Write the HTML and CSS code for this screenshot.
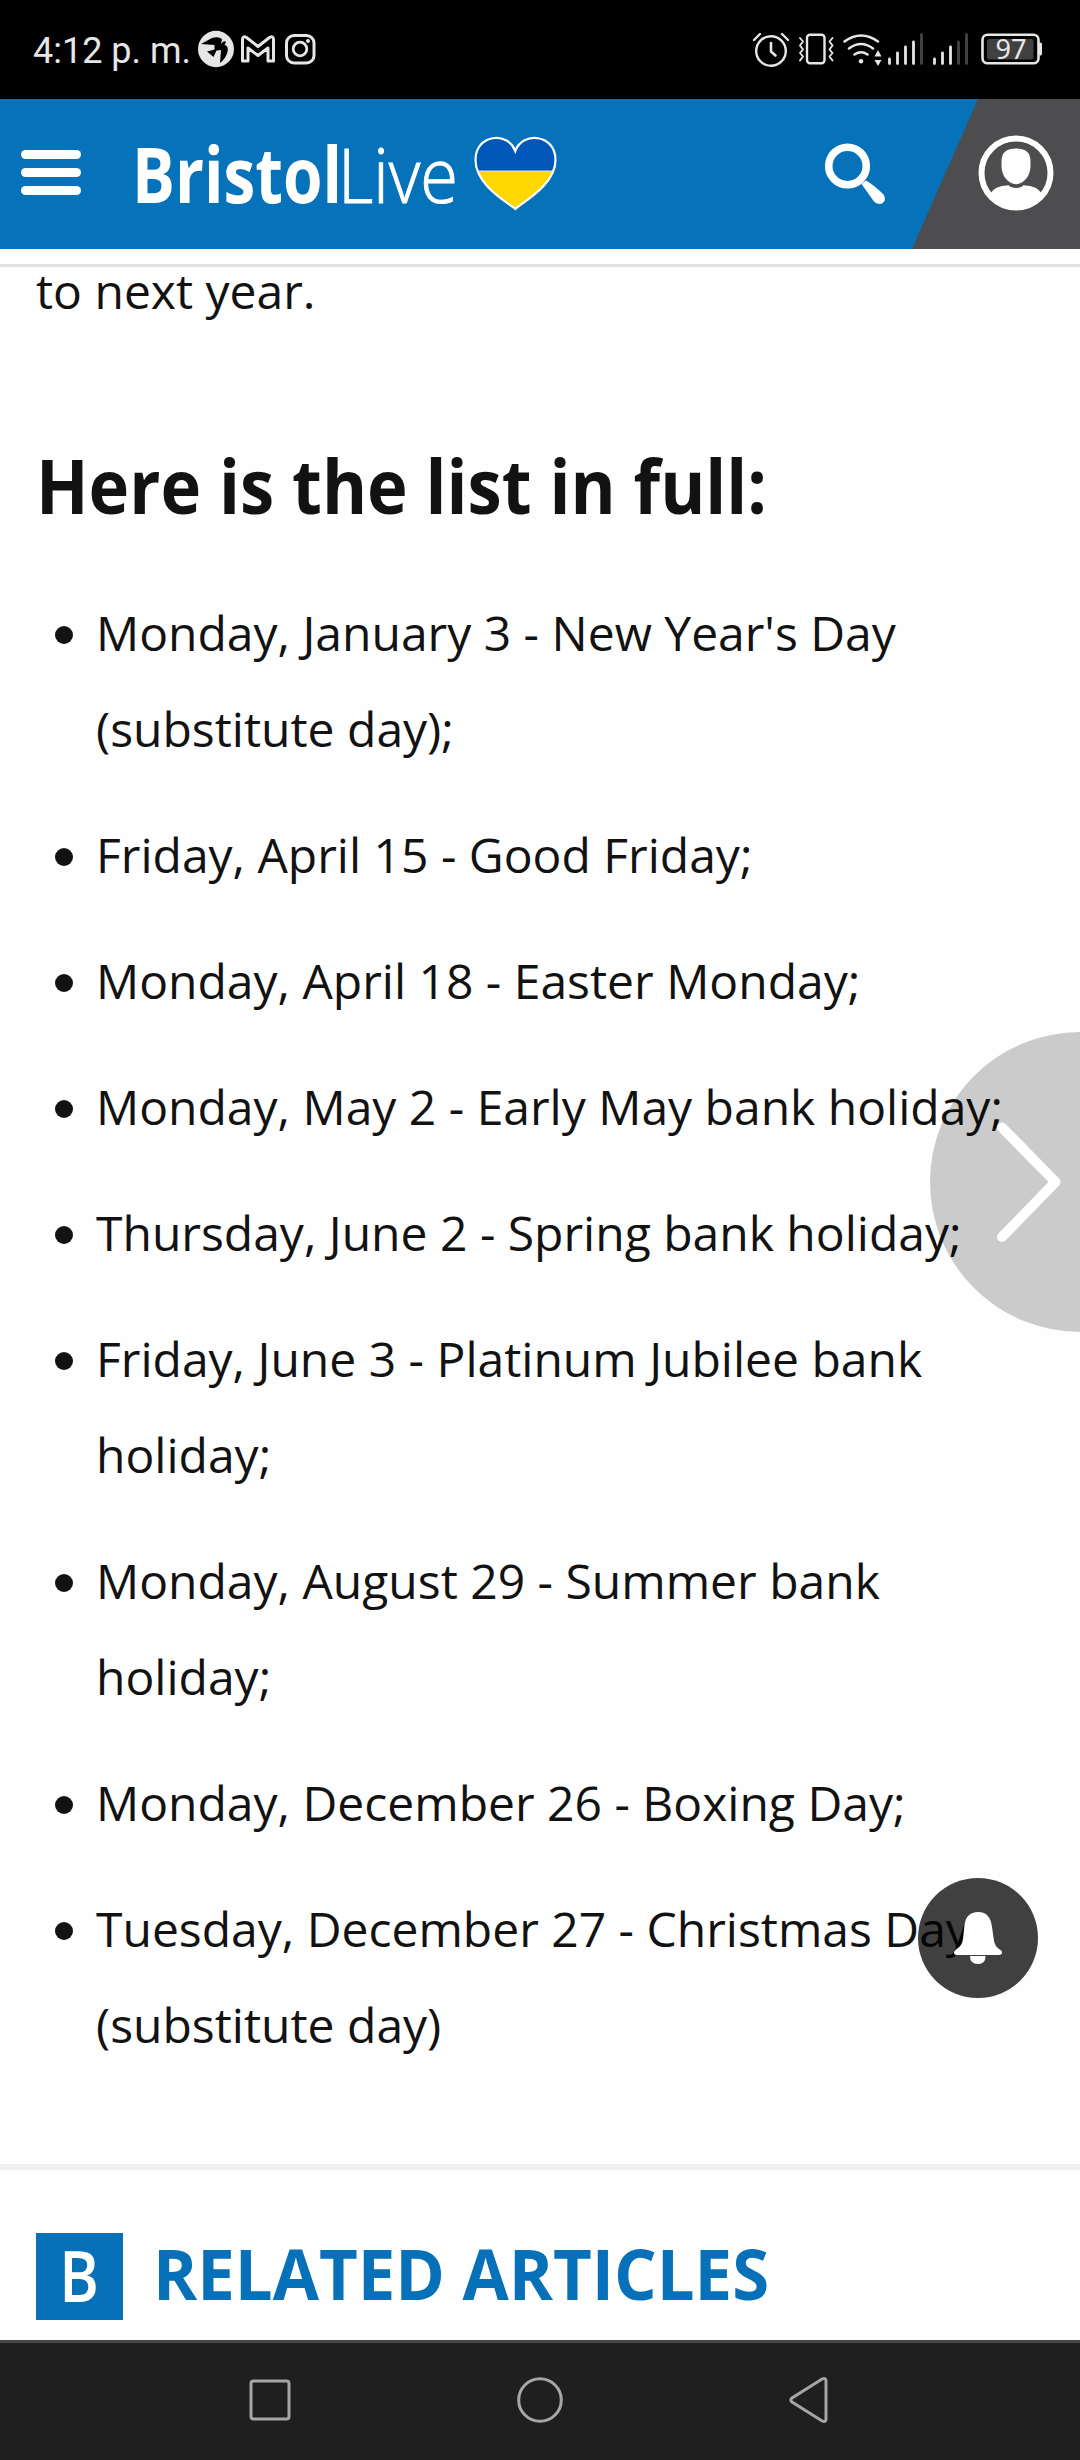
FILE: index.html
```html
<!DOCTYPE html>
<html lang="en">
<head>
  <meta charset="UTF-8">
  <meta name="viewport" content="width=device-width, initial-scale=1">
  <title>Bristol Live</title>
  <link rel="stylesheet" href="styles.css">
</head>
<body>

  <div class="status-bar">
    <span class="time">4:12 p. m.</span>
    <svg class="status-left" width="120" height="40" viewBox="197 29 120 40">
      <ellipse cx="216" cy="49" rx="18" ry="18.2" fill="#e6e6e6"/>
      <path fill="#000" d="M201 44 L211 38.5 Q218 36 222 39 L221 44 Q224 40 226 42 L224.500 45 Q229 46 227.500 52 Q225.500 59 220 63 L221 50 L216.500 50.500 L213.500 57 L207 51.500 L214.500 49.500 L214.500 45 Z"/>
      <path fill="none" stroke="#e6e6e6" stroke-width="3" stroke-linejoin="round" d="M242.500 61 V39.500 Q242.500 35.500 246.500 37.500 L258 46.500 L269.500 37.500 Q273.500 35.500 273.500 39.500 V61 H268 V48 L258 55.500 L248 48 V61 Z"/>
      <rect x="286.500" y="35.500" width="27.500" height="27.500" rx="7.500" fill="none" stroke="#e6e6e6" stroke-width="3"/>
      <circle cx="300" cy="49" r="6.800" fill="none" stroke="#e6e6e6" stroke-width="2.800"/>
      <circle cx="308" cy="41" r="2" fill="#e6e6e6"/>
    </svg>
    <svg class="status-right" width="296" height="40" viewBox="750 29 296 40" fill="none" stroke="#e6e6e6" stroke-linecap="round" stroke-linejoin="round">
      <circle cx="771" cy="51" r="14.800" stroke-width="2.400"/>
      <path stroke-width="2.600" d="M771 43 V51.500 L775.500 55.500"/>
      <path stroke-width="2.400" d="M754 40 L760 34 M782 34 L788 40"/>
      <rect x="807" y="34.700" width="17.500" height="28.500" rx="3" stroke-width="2.400"/>
      <path stroke-width="1.900" d="M800 38 L803 41.500 L800 45.500 L803 49.500 L800 53 L803 56.500 L800 60.500 M832.500 38 L829.500 41.500 L832.500 45.500 L829.500 49.500 L832.500 53 L829.500 56.500 L832.500 60.500"/>
      <path stroke-width="2.500" d="M844.500 41.500 Q861 29.500 878 41.500 M849 48.500 Q861 39.500 873 48.500 M854.500 54.500 Q861 50 867.500 54.500"/>
      <circle cx="861" cy="61.300" r="2.200" fill="#e6e6e6" stroke="none"/>
      <path fill="#e6e6e6" stroke="none" d="M874.500 56.500 L878 50 L881.500 56.500 Z M874.500 60 L878 66 L881.500 60 Z"/>
      <path stroke-width="2.800" d="M889.500 63.500 V59 M897.500 63.500 V53 M905.500 63.500 V47 M913.500 63.500 V42 M934.500 63.500 V59 M942.500 63.500 V53 M950.500 63.500 V47"/>
      <path stroke="#444" stroke-width="2.800" d="M921.500 63.500 V34.500 M958.500 63.500 V42 M966.500 63.500 V34.500"/>
      <rect x="982.500" y="34.700" width="56" height="28.500" rx="5" stroke-width="2.600"/>
      <rect x="987" y="39" width="46.500" height="20.500" rx="2" fill="#404040" stroke="none"/>
      <path stroke-width="3" d="M1040.500 44 V54"/>
      <text class="battery-text" x="995.500" y="59" textLength="31" lengthAdjust="spacingAndGlyphs">97</text>
    </svg>
  </div>

  <header class="header">
    <div class="menu"><span></span><span></span><span></span></div>
    <svg class="logo" width="430" height="126" viewBox="130 111 430 126">
      <text class="logo-bold" x="132" y="202.500" textLength="210" lengthAdjust="spacingAndGlyphs">Bristol</text>
      <text class="logo-light" x="338" y="202.500" textLength="120" lengthAdjust="spacingAndGlyphs">Live</text>
      <clipPath id="heart">
        <path d="M515.300 209 C507 202 475.500 185 475.500 160 C475.500 134 508 131 515.300 151 C522.500 131 555.500 134 555.500 160 C555.500 185 523 202 515.300 209 Z"/>
      </clipPath>
      <g clip-path="url(#heart)">
        <rect x="470" y="130" width="90" height="41" fill="#0057b8"/>
        <rect x="470" y="171" width="90" height="45" fill="#ffd700"/>
        <rect x="470" y="170.500" width="90" height="1.200" fill="#dde"/>
      </g>
      <path fill="none" stroke="#fff" stroke-width="2.200" d="M515.300 209 C507 202 475.500 185 475.500 160 C475.500 134 508 131 515.300 151 C522.500 131 555.500 134 555.500 160 C555.500 185 523 202 515.300 209 Z"/>
    </svg>
    <svg class="search" width="64" height="64" viewBox="823 141 64 64">
      <circle cx="847.500" cy="166" r="18.800" fill="none" stroke="#fff" stroke-width="7.600"/>
      <path fill="#fff" d="M861.500 184 L866 180.500 Q874 185 883.500 194.500 Q887 200 882 203.500 Q877 205 874 201.500 Z"/>
    </svg>
    <div class="account">
      <svg width="76" height="76" viewBox="0 0 76 76">
        <circle cx="38" cy="38" r="34.500" fill="none" stroke="#fff" stroke-width="6"/>
        <path fill="#fff" d="M38 13.500 C47 13.500 52.500 17 52.500 26 V31 C52.500 41 45.500 49.200 38 49.200 C30.500 49.200 23.500 41 23.500 31 V26 C23.500 17 29 13.500 38 13.500 Z"/>
        <path fill="#fff" d="M12 59 Q16 51 30.500 50.300 Q33 53 38 53 Q43 53 45.500 50.300 Q60 51 64 59 Q53 73 38 73 Q23 73 12 59 Z"/>
      </svg>
    </div>
  </header>

  <main class="article">
    <div class="strip"></div>
    <p class="intro">to next year.</p>
    <h2><span>Here is the list in full:</span></h2>
    <ul class="holidays">
      <li>Monday, January 3 - New Year's Day (substitute day);</li>
      <li>Friday, April 15 - Good Friday;</li>
      <li>Monday, April 18 - Easter Monday;</li>
      <li>Monday, May 2 - Early May bank holiday;</li>
      <li>Thursday, June 2 - Spring bank holiday;</li>
      <li>Friday, June 3 - Platinum Jubilee bank holiday;</li>
      <li>Monday, August 29 - Summer bank holiday;</li>
      <li>Monday, December 26 - Boxing Day;</li>
      <li>Tuesday, December 27 - Christmas Day (substitute day)</li>
    </ul>
    <section class="related">
      <div class="badge"><span>B</span></div>
      <h3><span>RELATED ARTICLES</span></h3>
    </section>
  </main>

  <nav class="nav-bar">
    <svg width="50" height="50" viewBox="0 0 50 50"><rect x="6" y="6" width="38" height="38" rx="2.500"/></svg>
    <svg width="50" height="50" viewBox="0 0 50 50"><circle cx="25" cy="25" r="21.300"/></svg>
    <svg width="50" height="50" viewBox="0 0 50 50"><path d="M37.500 3.800 L7 23 Q4.500 25 7 27 L37.500 46.200 Q41 47.500 41 44 V6 Q41 2.500 37.500 3.800 Z"/></svg>
  </nav>

  <!-- floating buttons -->
  <div class="next">
    <svg width="150" height="300" viewBox="0 0 150 300">
      <path d="M72 95.500 L125.500 150 L72 205"/>
    </svg>
  </div>
  <div class="bell">
    <svg width="120" height="120" viewBox="0 0 120 120">
      <path d="M60 34 C69 34 73 40 74 49 L76 63 Q77 68 81 71 Q84.500 73 84 75 Q83.500 77 81 77 H39 Q36 77 36 74.500 Q36 72.500 40 70 Q44.500 67 45 61 L46.500 47 C47.500 39 52 34 60 34 Z"/>
      <path d="M52 78 H67.500 Q67.500 86 60 86 Q52 86 52 78 Z"/>
    </svg>
  </div>

</body>
</html>
```
FILE: styles.css
```css
* {
  box-sizing: border-box;
}

body {
  margin: 0;
  width: 1080px;
  height: 2460px;
  display: flex;
  flex-direction: column;
  position: relative;
  overflow: hidden;
  background-color: #fefefe;
  color: #121212;
  font-family: 'Open Sans', sans-serif;
}

svg {
  display: block;
  flex: none;
}

.status-bar {
  flex: none;
  height: 99px;
  display: flex;
  align-items: flex-start;
  padding: 29px 34px 0 33px;
  background-color: #000;
  color: #e6e6e6;
}

.time {
  width: 164px;
  font-family: Roboto, sans-serif;
  font-size: 36px;
  line-height: 45px;
  white-space: nowrap;
}

.status-right {
  margin-left: auto;
}

.battery-text {
  font-family: 'Noto Sans', sans-serif;
  font-size: 27px;
  fill: #e6e6e6;
  stroke: none;
}

.header {
  flex: none;
  height: 150px;
  display: flex;
  padding-left: 21px;
  background-color: #0672ba;
}

.menu {
  width: 60px;
  padding-top: 51px;
  display: flex;
  flex-direction: column;
  gap: 9px;
}

.menu span {
  height: 9px;
  border-radius: 5px;
  background-color: #fff;
}

.logo {
  margin: 12px 0 0 49px;
}

.logo text {
  font-family: 'Open Sans', sans-serif;
  fill: #fff;
}

.logo .logo-bold {
  font-size: 77px;
  font-weight: 700;
}

.logo .logo-light {
  font-size: 76px;
  font-weight: 300;
  stroke: #fff;
  stroke-width: 1px;
}

.search {
  margin: 42px 0 0 auto;
}

.account {
  width: 168px;
  margin-left: 25px;
  padding: 36px 0 0 65.500px;
  background-color: #4d4d4f;
  clip-path: polygon(66px 0, 100% 0, 100% 100%, 0 100%);
}

.article {
  flex: 1;
  min-height: 0;
  overflow: hidden;
}

.strip {
  height: 18px;
  border-bottom: 3px solid #e0e0e0;
}

.intro {
  margin: -24px 36px 0;
  font-size: 48px;
  line-height: 96px;
}

h2 {
  margin: 98px 36px 52px;
  height: 96px;
  font-size: 75px;
  line-height: 96px;
  font-weight: 700;
  white-space: nowrap;
}

h2 span {
  display: inline-block;
  transform: scaleX(0.917);
  transform-origin: left;
}

.holidays {
  margin: 0;
  padding: 0 36px 0 96px;
  list-style: none;
  font-size: 48px;
  line-height: 96px;
}

.holidays li {
  margin-bottom: 30px;
}

.holidays li::before {
  content: "";
  float: left;
  width: 18px;
  height: 18px;
  margin: 41px 0 0 -41px;
  border-radius: 50%;
  background-color: #121212;
}

.related {
  display: flex;
  align-items: center;
  margin-top: 91px;
  padding: 63px 36px 0;
  border-top: 6px solid #f0f0f0;
}

.badge {
  width: 87px;
  height: 87px;
  display: flex;
  justify-content: center;
  background-color: #0670b8;
  color: #fff;
  font-size: 70px;
  font-weight: 600;
  line-height: 84px;
}

.badge span {
  transform: scaleX(0.86);
}

h3 {
  margin: 0 0 0 30px;
  height: 87px;
  font-size: 70px;
  line-height: 81px;
  font-weight: 700;
  color: #0670b8;
  white-space: nowrap;
}

h3 span {
  display: inline-block;
  transform: scaleX(0.958);
  transform-origin: left;
}

.nav-bar {
  flex: none;
  height: 120px;
  display: flex;
  justify-content: center;
  gap: 220px;
  padding-top: 32px;
  border-top: 3px solid #464646;
  background-color: #1f1f1f;
}

.nav-bar svg {
  fill: none;
  stroke: #a6a6a6;
  stroke-width: 3;
}

.next {
  position: absolute;
  top: 1032px;
  right: 0;
  width: 150px;
  height: 300px;
  border-radius: 150px 0 0 150px;
  background-color: rgba(0, 0, 0, 0.2);
}

.next path {
  fill: none;
  stroke: #fff;
  stroke-width: 10;
  stroke-linecap: round;
  stroke-linejoin: round;
}

.bell {
  position: absolute;
  top: 1878px;
  left: 918px;
  width: 120px;
  height: 120px;
  border-radius: 50%;
  background-color: rgba(0, 0, 0, 0.75);
}

.bell path {
  fill: #fff;
}
```
